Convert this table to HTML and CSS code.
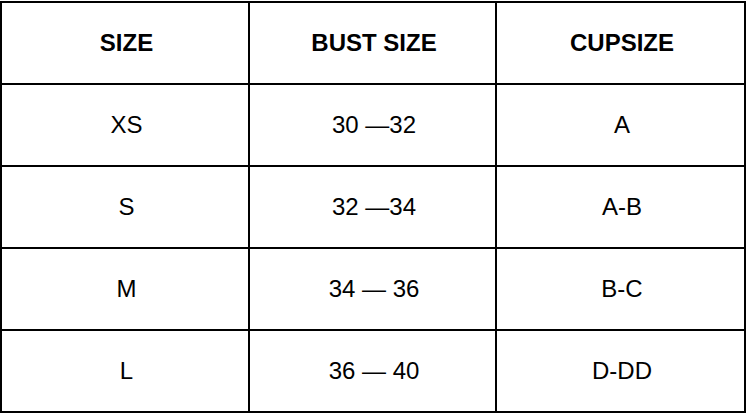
FILE: index.html
```html
<!DOCTYPE html>
<html>
<head>
<meta charset="utf-8">
<link rel="stylesheet" href="styles.css">
</head>
<body>
<div class="size-table">
  <div class="cell head">SIZE</div>
  <div class="cell head">BUST SIZE</div>
  <div class="cell head">CUPSIZE</div>
  <div class="cell">XS</div>
  <div class="cell">30 —32</div>
  <div class="cell">A</div>
  <div class="cell">S</div>
  <div class="cell">32 —34</div>
  <div class="cell">A-B</div>
  <div class="cell">M</div>
  <div class="cell">34 — 36</div>
  <div class="cell">B-C</div>
  <div class="cell">L</div>
  <div class="cell">36 — 40</div>
  <div class="cell">D-DD</div>
</div>
</body>
</html>
```
FILE: styles.css
```css
html, body {
  margin: 0;
  padding: 0;
  background: #ffffff;
}
body {
  padding-top: 1px;
}
.size-table {
  width: 746px;
  height: 412px;
  box-sizing: border-box;
  display: grid;
  grid-template-columns: 246px 245px 247px;
  grid-template-rows: repeat(5, 80px);
  gap: 2px;
  padding: 2px;
  background: #000000;
}
.cell {
  background: #ffffff;
  display: flex;
  align-items: center;
  justify-content: center;
  font-family: "Liberation Sans", Arial, sans-serif;
  font-size: 24px;
  color: #000000;
  padding-left: 3px;
}
.head {
  font-weight: bold;
}
```
